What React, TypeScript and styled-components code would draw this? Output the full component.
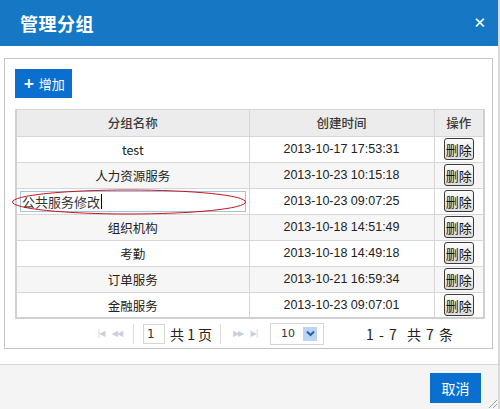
import React from "react";
import styled, { createGlobalStyle } from "styled-components";

const Global = createGlobalStyle`
  html, body { margin: 0; padding: 0; background: #fff; }
  body { font-family: "Noto Sans CJK SC", "DejaVu Sans", sans-serif; }
  * { box-sizing: border-box; }
`;

const Dialog = styled.div`
  width: 500px;
  height: 409px;
  display: flex;
  flex-direction: column;
  position: relative;
  border-right: 2px solid #d8d8d8;
  overflow: hidden;
`;

const TitleBar = styled.div`
  height: 46px;
  background: #1677c4;
  display: flex;
  align-items: center;
  justify-content: space-between;
  padding: 0 12px 0 20px;
  color: #fff;
`;

const Title = styled.div`
  font-size: 18px;
  font-weight: 700;
  letter-spacing: 0.5px;
`;

const Close = styled.div`
  font-family: "DejaVu Sans", sans-serif;
  font-size: 15px;
  font-weight: 700;
`;

const Body = styled.div`
  flex: 1;
  padding: 12px 5px 0 4px;
`;

const Panel = styled.div`
  border: 1px solid #c4c4c4;
  padding: 10px 7px 0 10px;
  height: 291px;
  display: flex;
  flex-direction: column;
`;

const PrimaryButton = styled.button`
  background: #0b6fcf;
  color: #fff;
  border: none;
  font-family: inherit;
  font-size: 13px;
  display: flex;
  align-items: center;
  white-space: nowrap;
  cursor: pointer;
`;

const AddButton = styled(PrimaryButton)`
  width: 57px;
  height: 29px;
  margin-bottom: 11px;
  gap: 4px;
  padding: 0 0 0 8px;
`;

const Plus = styled.span`
  font-family: "DejaVu Sans", sans-serif;
  font-weight: 700;
  font-size: 14px;
  line-height: 1;
`;

const Table = styled.table`
  width: 470px;
  border-collapse: collapse;
  border: 2px solid #d0d0d0;
  border-top: 1px solid #cfcfcf;
  font-size: 12.5px;
  color: #222;
  table-layout: fixed;
`;

const Th = styled.th<{ $w?: number }>`
  width: ${(p) => (p.$w ? `${p.$w}px` : "auto")};
  height: 27px;
  background: #ececec;
  border: 1px solid #d6d6d6;
  font-weight: 500;
  color: #3a3a3a;
  font-size: 12.5px;
  padding: 0;
`;

const Tr = styled.tr<{ $alt: boolean }>`
  background: ${(p) => (p.$alt ? "#f6f6f6" : "#fff")};
`;

const Td = styled.td`
  height: 26px;
  border: 1px solid #d6d6d6;
  text-align: center;
  padding: 0;
  position: relative;
`;

const TimeTd = styled(Td)`
  font-family: "Liberation Sans", sans-serif;
  font-size: 12.5px;
`;

const DelButton = styled.button`
  height: 22px;
  width: 30px;
  padding: 0;
  border: 1px solid #3a3a3a;
  border-radius: 3px;
  background: linear-gradient(#fbfbfb, #dcdcdc);
  font-family: inherit;
  font-size: 13px;
  color: #111;
  display: block;
  margin: 0 auto;
`;

const EditInput = styled.div`
  margin: 0 3px 0 3px;
  height: 21px;
  border: 1px solid #9fc4e6;
  background: #fff;
  text-align: left;
  padding-left: 1px;
  font-size: 13px;
  line-height: 19px;
  color: #333;
  display: flex;
  align-items: center;
`;

const Caret = styled.span`
  display: inline-block;
  width: 1px;
  height: 15px;
  background: #000;
  margin-left: 1px;
`;

const Ellipse = styled.svg`
  position: absolute;
  left: -6px;
  top: -1px;
  pointer-events: none;
`;

const Pager = styled.div`
  height: 29px;
  display: flex;
  align-items: center;
  padding-left: 78px;
  font-size: 13px;
  color: #222;
`;

const PagerIcon = styled.span`
  font-family: "DejaVu Sans", sans-serif;
  font-size: 8px;
  color: #c8d0dc;
  width: 16px;
  text-align: center;
  letter-spacing: -1px;
`;

const Sep = styled.span`
  width: 1px;
  height: 20px;
  background: #dedede;
  margin: 0 9px 0 8px;
`;

const PageInput = styled.div`
  width: 22px;
  height: 20px;
  border: 1px solid #d6d6d6;
  font-family: "DejaVu Sans", sans-serif;
  font-size: 12px;
  line-height: 18px;
  padding-left: 3px;
  color: #333;
`;

const PageText = styled.span`
  margin-left: 5px;
  font-size: 14px;
`;

const Select = styled.div`
  width: 54px;
  height: 22px;
  border: 1px solid #d6d6d6;
  margin-left: 8px;
  display: flex;
  align-items: center;
  justify-content: space-between;
  padding: 0 6px 0 10px;
  font-family: "DejaVu Sans", sans-serif;
  font-size: 11px;
  color: #333;
`;

const Arrow = styled.span`
  width: 14px;
  height: 14px;
  background: #bcd3f3;
  display: flex;
  align-items: center;
  justify-content: center;
`;

const Summary = styled.span`
  margin-left: 42px;
  font-size: 14px;
  word-spacing: 2px;
`;

const Footer = styled.div`
  height: 45px;
  background: #f4f4f4;
  border-top: 1px solid #d8d8d8;
  display: flex;
  justify-content: flex-end;
  align-items: flex-start;
  padding: 8px 17px 0 0;
  position: relative;
`;

const CancelButton = styled(PrimaryButton)`
  width: 51px;
  height: 30px;
  justify-content: center;
  padding: 0;
  font-size: 14px;
`;

const Grip = styled.svg`
  position: absolute;
  right: 0;
  bottom: 0;
`;

const rows = [
  { name: "test", time: "2013-10-17 17:53:31" },
  { name: "人力资源服务", time: "2013-10-23 10:15:18" },
  { name: "公共服务修改", time: "2013-10-23 09:07:25", editing: true },
  { name: "组织机构", time: "2013-10-18 14:51:49" },
  { name: "考勤", time: "2013-10-18 14:49:18" },
  { name: "订单服务", time: "2013-10-21 16:59:34" },
  { name: "金融服务", time: "2013-10-23 09:07:01" },
];

export default function App() {
  return (
    <>
      <Global />
      <Dialog>
        <TitleBar>
          <Title>管理分组</Title>
          <Close>✕</Close>
        </TitleBar>
        <Body>
          <Panel>
            <AddButton>
              <Plus>+</Plus>增加
            </AddButton>
            <Table>
              <thead>
                <tr>
                  <Th $w={233}>分组名称</Th>
                  <Th $w={185}>创建时间</Th>
                  <Th>操作</Th>
                </tr>
              </thead>
              <tbody>
                {rows.map((r, i) => (
                  <Tr key={i} $alt={i % 2 === 1}>
                    <Td>
                      {r.editing ? (
                        <>
                          <EditInput>
                            {r.name}
                            <Caret />
                          </EditInput>
                          <Ellipse width="236" height="28" viewBox="0 0 236 28">
                            <ellipse cx="118" cy="14" rx="116.5" ry="12" fill="none" stroke="#c4161c" strokeWidth="1" />
                          </Ellipse>
                        </>
                      ) : (
                        r.name
                      )}
                    </Td>
                    <TimeTd>{r.time}</TimeTd>
                    <Td>
                      <DelButton>删除</DelButton>
                    </Td>
                  </Tr>
                ))}
              </tbody>
            </Table>
            <Pager>
              <PagerIcon>|◀</PagerIcon>
              <PagerIcon>◀◀</PagerIcon>
              <Sep />
              <PageInput>1</PageInput>
              <PageText>共 1 页</PageText>
              <Sep />
              <PagerIcon>▶▶</PagerIcon>
              <PagerIcon>▶|</PagerIcon>
              <Select>
                10
                <Arrow>
                  <svg width="9" height="7" viewBox="0 0 9 7">
                    <path d="M1 1.5 L4.5 5 L8 1.5" fill="none" stroke="#2d5fa8" strokeWidth="2" />
                  </svg>
                </Arrow>
              </Select>
              <Summary>1 - 7&nbsp;&nbsp;共 7 条</Summary>
            </Pager>
          </Panel>
        </Body>
        <Footer>
          <CancelButton>取消</CancelButton>
          <Grip width="12" height="12" viewBox="0 0 12 12">
            <path d="M11 3 L3 11 M11 7 L7 11" stroke="#a0a0a0" strokeWidth="1" />
          </Grip>
        </Footer>
      </Dialog>
    </>
  );
}
